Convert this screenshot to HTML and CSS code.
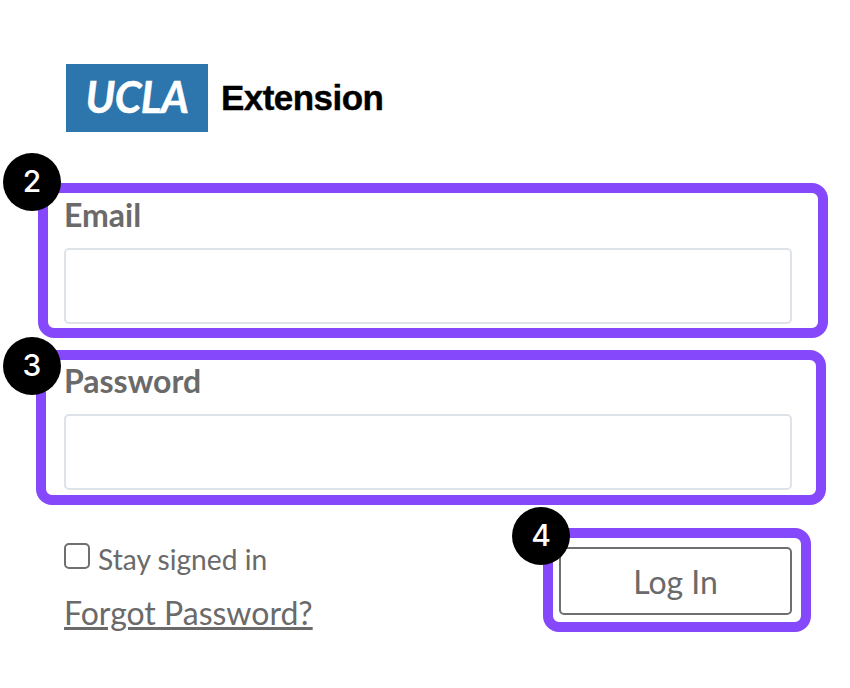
FILE: index.html
```html
<!DOCTYPE html>
<html lang="en-us">
<head>
    <meta charset="UTF-8">
    <meta name="viewport" content="width=device-width, initial-scale=1.0">
    <title>Log In</title>
    <link rel="stylesheet" href="styles.css">
</head>
<body>
    <header class="logo">
        <div class="logo-box">UCLA</div>
        <div class="logo-text">Extension</div>
    </header>

    <form class="login-form">
        <div class="field field-email">
            <span class="badge">2</span>
            <label class="field-label" for="email">Email</label>
            <input class="field-input" id="email" type="text">
        </div>

        <div class="field field-password">
            <span class="badge">3</span>
            <label class="field-label" for="password">Password</label>
            <input class="field-input" id="password" type="password">
        </div>

        <div class="form-bottom">
            <div class="form-links">
                <label class="stay-signed">
                    <span class="checkbox"></span>
                    Stay signed in
                </label>
                <a class="forgot" href="#">Forgot Password?</a>
            </div>
            <div class="submit-box">
                <span class="badge">4</span>
                <button class="submit-btn" type="button">Log In</button>
            </div>
        </div>
    </form>
</body>
</html>
```

FILE: styles.css
```css
body {
    font-family: Lato, "Open Sans", sans-serif;
    margin: 0;
    padding: 0;
    background-color: #fff;
    color: #6a6a6a;
}

.logo {
    display: flex;
    align-items: center;
    margin: 64px 0 0 66px;
}
.logo-box {
    width: 142px;
    height: 68px;
    background-color: #2d75ad;
    color: #fff;
    font-family: Lato, sans-serif;
    font-size: 43px;
    font-style: italic;
    font-weight: bold;
    letter-spacing: -0.5px;
    line-height: 66px;
    text-align: center;
    -webkit-text-stroke: 0.5px #fff;
}
.logo-text {
    margin-left: 13px;
    color: #000;
    font-family: "Liberation Sans", Arial, sans-serif;
    font-size: 35px;
    font-weight: bold;
    letter-spacing: -0.55px;
    -webkit-text-stroke: 0.4px #000;
}

.field {
    position: relative;
    box-sizing: border-box;
    width: 790px;
    height: 155px;
    border: 10px solid #8549fb;
    border-radius: 16px;
}
.field-email {
    margin: 51px 0 0 38px;
    padding: 0 0 0 16px;
}
.field-password {
    margin: 12px 0 0 36px;
    padding: 0 0 0 18px;
}
.field-label {
    display: block;
    height: 54px;
    font-size: 32px;
    font-weight: bold;
    line-height: 42px;
}
.field-email .field-label {
    height: 55px;
    line-height: 44px;
}
.field-input {
    display: block;
    box-sizing: border-box;
    width: 728px;
    height: 76px;
    border: 2px solid #dde3e9;
    border-radius: 5px;
    background-color: #fff;
}

.badge {
    position: absolute;
    left: -45px;
    top: -40px;
    width: 58px;
    height: 58px;
    border-radius: 50%;
    background-color: #000;
    color: #fff;
    font-family: Inter, "Liberation Sans", sans-serif;
    font-size: 30px;
    font-weight: 500;
    line-height: 56px;
    text-align: center;
}
.field-password .badge {
    top: -23px;
    left: -43px;
}

.form-bottom {
    display: flex;
    justify-content: space-between;
    margin: 23px 39px 0 64px;
}
.form-links {
    display: flex;
    flex-direction: column;
}
.stay-signed {
    display: flex;
    align-items: center;
    gap: 8px;
    margin-top: 11px;
    font-size: 28.2px;
    line-height: 40px;
}
.checkbox {
    box-sizing: border-box;
    width: 26px;
    height: 26px;
    margin-bottom: 6px;
    border: 2px solid #6f6f6f;
    border-radius: 5px;
}
.forgot {
    margin-top: 14px;
    color: #6a6a6a;
    font-size: 32px;
    line-height: 40px;
    text-decoration: underline;
}

.submit-box {
    position: relative;
    box-sizing: border-box;
    width: 268px;
    height: 104px;
    padding: 9px 6px;
    border: 10px solid #8549fb;
    border-radius: 16px;
}
.submit-box .badge {
    left: -41px;
    top: -31px;
}
.submit-btn {
    display: block;
    box-sizing: border-box;
    width: 233px;
    height: 68px;
    border: 2px solid #6f6f6f;
    border-radius: 5px;
    background-color: #fff;
    color: #6a6a6a;
    font-family: Lato, "Open Sans", sans-serif;
    font-size: 32px;
}
```
